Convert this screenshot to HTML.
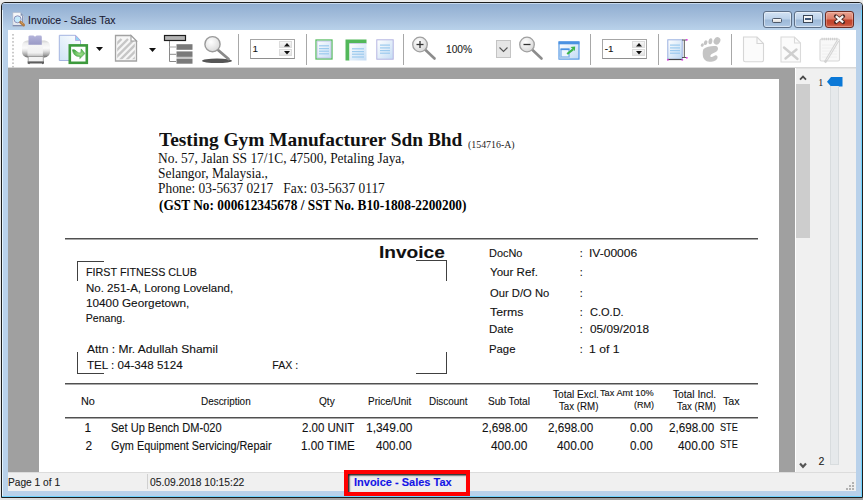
<!DOCTYPE html>
<html><head><meta charset="utf-8">
<style>
*{margin:0;padding:0;box-sizing:border-box}
html,body{width:863px;height:500px;overflow:hidden;background:#e8e8e8;font-family:"Liberation Sans",sans-serif}
.a{position:absolute}
.t{position:absolute;white-space:nowrap;line-height:1;-webkit-text-stroke:0.1px currentColor}
.s{font-family:"Liberation Serif",serif;-webkit-text-stroke:0}
.h{position:absolute;background:#404040;height:1px}
.v{position:absolute;background:#404040;width:1px}
.sep{position:absolute;top:34px;width:1px;height:31px;background:#a8a8a8}
svg{position:absolute;overflow:visible}
</style></head><body>
<div class="a" style="left:0;top:0;width:863px;height:2px;background:#ececec"></div>
<div class="a" style="left:0;top:498px;width:863px;height:2px;background:linear-gradient(90deg,#e4e4e4 0,#c8c8c8 90px,#a2a2a2 220px,#a0a0a0 100%)"></div>
<div class="a" style="left:1px;top:2px;width:862px;height:496px;background:#b9d1ea;border:1px solid #1e1e1e;border-width:1px 1px 1.2px 1px;border-radius:4px 4px 0 0"></div>
<div class="a" style="left:2px;top:3px;width:860px;height:27px;border-radius:3px 3px 0 0;background:linear-gradient(#c6d9ee 0,#c6d9ee 1px,#91aed2 1px,#a3bddb 13px,#b9d2ea 27px)"></div>
<div class="a" style="left:2px;top:10px;width:1px;height:486px;background:#e4f4ff"></div>
<div class="a" style="left:861px;top:10px;width:1px;height:487px;background:#6fd3ff"></div>
<div class="a" style="left:2px;top:496px;width:860px;height:1px;background:#6fd3ff"></div>
<svg style="left:12px;top:12px" width="14" height="15" viewBox="0 0 14 15">
<defs><linearGradient id="tig" x1="0" y1="0" x2="0" y2="1"><stop offset="0" stop-color="#fbfbfb"/><stop offset="1" stop-color="#dfe4ec"/></linearGradient></defs>
<path d="M0.8 0.6 H8.6 L11.8 3.8 V14.3 H0.8 Z" fill="url(#tig)" stroke="#a8b2c4" stroke-width=".6"/>
<path d="M0.8 13.6 H11.8" stroke="#7e8cae" stroke-width="1.2"/>
<path d="M8.6 0.6 V3.8 H11.8 Z" fill="#7f92b4"/>
<path d="M10.6 4 V12.5" stroke="#8696b8" stroke-width="1.2"/>
<circle cx="5.6" cy="7.3" r="3.5" fill="#c4eafc" stroke="#8e92bc" stroke-width="1"/>
<path d="M8.6 10.2 L11.6 13" stroke="#b07a40" stroke-width="2.8" stroke-linecap="round"/>
<path d="M8.9 10.1 L11.2 12.2" stroke="#d9a060" stroke-width="1"/>
</svg>

<div class="a" style="left:763px;top:11px;width:29px;height:17px;border:1px solid #5d6f86;border-radius:3px;background:linear-gradient(#d3e2f3 0,#bcd2ea 7px,#9db9d8 8px,#a9c3e0 13px,#c3d8ee 16px);box-shadow:inset 0 0 0 1px rgba(255,255,255,.45)"></div>
<div class="a" style="left:772px;top:18px;width:10px;height:5px;border:1px solid #4d5868;border-radius:1.5px;background:linear-gradient(#fafafa,#dcdcdc)"></div>
<div class="a" style="left:794px;top:11px;width:29px;height:17px;border:1px solid #5d6f86;border-radius:3px;background:linear-gradient(#d3e2f3 0,#bcd2ea 7px,#9db9d8 8px,#a9c3e0 13px,#c3d8ee 16px);box-shadow:inset 0 0 0 1px rgba(255,255,255,.45)"></div>
<div class="a" style="left:803px;top:15px;width:10px;height:8px;border:1px solid #3a4656;background:#f4f4f4"></div>
<div class="a" style="left:805px;top:17.5px;width:6px;height:2.5px;background:#3f5676"></div>
<div class="a" style="left:825px;top:11px;width:29px;height:17px;border:1px solid #6b2a22;border-radius:3px;background:linear-gradient(#e9a392 0,#dc7d68 7px,#c2432b 8px,#c54a33 12px,#d97a62 16px);box-shadow:inset 0 0 0 1px rgba(255,220,210,.35)"></div>
<svg style="left:833.5px;top:15px" width="11" height="8.5" viewBox="0 0 11 8.5"><path d="M1.8 1.2 L9.2 7.3 M9.2 1.2 L1.8 7.3" stroke="#4a2a26" stroke-width="3.8" stroke-linecap="round"/><path d="M1.8 1.2 L9.2 7.3 M9.2 1.2 L1.8 7.3" stroke="#f6f6f6" stroke-width="2.2" stroke-linecap="butt"/></svg>

<div class="a" style="left:8px;top:30px;width:848px;height:38px;background:#fff"></div>
<div class="a" style="left:8px;top:67px;width:848px;height:1px;background:#d8d8d8"></div>
<svg style="left:12px;top:33.5px" width="2" height="34"><rect x="0.2" y="0.0" width="1.6" height="1.6" fill="#bcbcbc"/><rect x="0.2" y="3.5" width="1.6" height="1.6" fill="#bcbcbc"/><rect x="0.2" y="7.1" width="1.6" height="1.6" fill="#bcbcbc"/><rect x="0.2" y="10.6" width="1.6" height="1.6" fill="#bcbcbc"/><rect x="0.2" y="14.2" width="1.6" height="1.6" fill="#bcbcbc"/><rect x="0.2" y="17.8" width="1.6" height="1.6" fill="#bcbcbc"/><rect x="0.2" y="21.3" width="1.6" height="1.6" fill="#bcbcbc"/><rect x="0.2" y="24.8" width="1.6" height="1.6" fill="#bcbcbc"/><rect x="0.2" y="28.4" width="1.6" height="1.6" fill="#bcbcbc"/><rect x="0.2" y="31.9" width="1.6" height="1.6" fill="#bcbcbc"/></svg>
<svg style="left:21px;top:35px" width="30" height="30" viewBox="0 0 30 30">
<defs>
<linearGradient id="pb" x1="0" y1="0" x2="0" y2="1"><stop offset="0" stop-color="#d2d2d2"/><stop offset=".18" stop-color="#efefef"/><stop offset=".45" stop-color="#fbfbfb"/><stop offset=".62" stop-color="#e2e2e2"/><stop offset=".85" stop-color="#a4a4a4"/><stop offset="1" stop-color="#6a6a6a"/></linearGradient>
<linearGradient id="pp" x1="0" y1="0" x2="0" y2="1"><stop offset="0" stop-color="#b4b4da"/><stop offset="1" stop-color="#9a9ac6"/></linearGradient>
<linearGradient id="pf" x1="0" y1="0" x2="0" y2="1"><stop offset="0" stop-color="#f6f6f6"/><stop offset=".7" stop-color="#f0f0f0"/><stop offset="1" stop-color="#c4c4c4"/></linearGradient>
</defs>
<rect x="1" y="5.4" width="28" height="17" rx="5.5" fill="url(#pb)"/>
<path d="M7.5 1.2 Q8 0.4 9.5 0.6 L12.5 0.6 Q14 2.6 15.5 0.6 L19.5 0.6 Q20.8 0.6 20.8 2 L20.8 9.8 L7.5 9.8 Z" fill="url(#pp)"/>
<rect x="6.5" y="10.6" width="15.4" height="10.4" fill="url(#pf)"/>
<path d="M7.2 21.5 H22.3 V27 H7.2 Z" fill="#f2f2f2" stroke="#9a9a9a" stroke-width=".9"/>
<path d="M6.6 26.6 H23 L23 28.6 L21.5 29.2 L20.8 28.6 H9 L8.2 29.2 L6.6 28.6 Z" fill="#5e5e5e"/>
</svg>
<svg style="left:58px;top:34px" width="32" height="31" viewBox="0 0 32 31">
<defs><linearGradient id="eg" x1="1" y1="0" x2="0" y2="1"><stop offset="0" stop-color="#fff"/><stop offset="1" stop-color="#d0e4f6"/></linearGradient>
<radialGradient id="ag" cx=".6" cy=".5" r=".6"><stop offset="0" stop-color="#a6e690"/><stop offset="1" stop-color="#45a845"/></radialGradient></defs>
<path d="M1.3 1.3 H17.5 L22.5 6.5 V26.5 H1.3 Z" fill="url(#eg)" stroke="#a4b4e0" stroke-width="1"/>
<path d="M17.5 1.3 V6.5 H22.5 Z" fill="#8fd4f4" stroke="#b4a4dc" stroke-width=".8"/>
<rect x="11.8" y="11.4" width="17" height="17.4" fill="#fff" stroke="#3d9a3d" stroke-width="2.6"/>
<path d="M14.4 15.8 Q16.6 15 19 17.8 Q20.6 19.4 22.8 19 L23.2 14.9 L26.9 19.6 L21.8 24.6 L22 22.3 Q18.5 23 16.3 20.5 Q14.8 18.8 14.4 15.8 Z" fill="url(#ag)" stroke="#3e9e3e" stroke-width=".6"/>
</svg>
<svg style="left:96px;top:47px" width="7" height="4"><path d="M0 0 H7 L3.5 4 Z" fill="#111"/></svg>
<svg style="left:148.5px;top:47.5px" width="7" height="4"><path d="M0 0 H7 L3.5 4 Z" fill="#111"/></svg>
<svg style="left:114px;top:34px" width="24" height="29" viewBox="0 0 24 29">
<defs><clipPath id="hc"><path d="M3.2 3.2 H16.5 L20.8 7.5 V25.3 H3.2 Z"/></clipPath></defs>
<path d="M1.5 1.5 H17 L22.5 7 V27 H1.5 Z" fill="#f6f6f6"/>
<g clip-path="url(#hc)"><path d="M-14.5 27 L7.5 5" stroke="#c6c6c6" stroke-width="2.3"/><path d="M-8 27 L14 5" stroke="#c6c6c6" stroke-width="2.3"/><path d="M-1.5 27 L20.5 5" stroke="#c6c6c6" stroke-width="2.3"/><path d="M5 27 L27 5" stroke="#c6c6c6" stroke-width="2.3"/><path d="M11.5 27 L33.5 5" stroke="#c6c6c6" stroke-width="2.3"/><path d="M18 27 L40 5" stroke="#c6c6c6" stroke-width="2.3"/></g>
<path d="M1.5 1.5 H17 L22.5 7 V27 H1.5 Z" fill="none" stroke="#a2a2a2" stroke-width="1.3"/>
<path d="M17 1.5 V7 H22.5 Z" fill="#fff" stroke="#a2a2a2" stroke-width="1.1"/>
</svg>
<svg style="left:163px;top:34px" width="31" height="31" viewBox="0 0 31 31">
<rect x="1.5" y="1.5" width="21" height="5" fill="#b4b4b4" stroke="#1e1e1e" stroke-width="1.2"/>
<path d="M6.5 7 V27.5 M6.5 20.3 H13 M6.5 27.5 H13" stroke="#8a8a8a" stroke-width="1" fill="none"/>
<path d="M6.5 13 H13" stroke="#b4b4b4" stroke-width="1.2" fill="none"/>
<rect x="13.5" y="10.2" width="16" height="5.6" fill="#7a7a7a"/>
<rect x="13.5" y="17.4" width="16" height="5.5" fill="#7a7a7a"/>
<rect x="13.5" y="22.9" width="16" height="2" fill="#c8c8c8"/>
<rect x="13.5" y="24.9" width="16" height="4.8" fill="#7a7a7a"/>
</svg>
<svg style="left:201px;top:35px" width="32" height="29" viewBox="0 0 32 29">
<defs><radialGradient id="lg" cx=".4" cy=".35" r=".7"><stop offset="0" stop-color="#fff"/><stop offset="1" stop-color="#d8d8d8"/></radialGradient></defs>
<ellipse cx="16" cy="25.8" rx="15" ry="2.3" fill="#555"/>
<path d="M17 15 L27.5 24" stroke="#8a8a8a" stroke-width="2.8" stroke-linecap="round"/>
<circle cx="11.5" cy="9.2" r="7.6" fill="url(#lg)" stroke="#9a9a9a" stroke-width="1.4"/>
</svg>
<div class="sep" style="left:238px"></div>
<div class="sep" style="left:306px"></div>
<div class="sep" style="left:403px"></div>
<div class="sep" style="left:590px"></div>
<div class="sep" style="left:658px"></div>
<div class="sep" style="left:731px"></div>
<div class="a" style="left:249.5px;top:39px;width:45px;height:19.5px;border:1.5px solid #a6a6a6;border-bottom-color:#8e8e8e;background:#fff"></div>
<div class="a" style="left:279.3px;top:41.2px;width:13.2px;height:6.4px;background:linear-gradient(#f6f6f6,#e4e4e4);border:1px solid #dcdcdc"></div>
<div class="a" style="left:279.3px;top:49px;width:13.2px;height:6.9px;background:linear-gradient(#f6f6f6,#e4e4e4);border:1px solid #dcdcdc"></div>
<svg style="left:283.5px;top:42.9px" width="6" height="3.4"><path d="M0 3.4 H6 L3 0 Z" fill="#111"/></svg>
<svg style="left:283.5px;top:51.2px" width="6" height="3.4"><path d="M0 0 H6 L3 3.4 Z" fill="#111"/></svg>
<div class="a" style="left:601.8px;top:39px;width:45px;height:19.5px;border:1.5px solid #a6a6a6;border-bottom-color:#8e8e8e;background:#fff"></div>
<div class="a" style="left:631.5999999999999px;top:41.2px;width:13.2px;height:6.4px;background:linear-gradient(#f6f6f6,#e4e4e4);border:1px solid #dcdcdc"></div>
<div class="a" style="left:631.5999999999999px;top:49px;width:13.2px;height:6.9px;background:linear-gradient(#f6f6f6,#e4e4e4);border:1px solid #dcdcdc"></div>
<svg style="left:635.8px;top:42.9px" width="6" height="3.4"><path d="M0 3.4 H6 L3 0 Z" fill="#111"/></svg>
<svg style="left:635.8px;top:51.2px" width="6" height="3.4"><path d="M0 0 H6 L3 3.4 Z" fill="#111"/></svg>
<svg style="left:314.5px;top:38.5px" width="18" height="21" viewBox="0 0 18 21">
<defs><linearGradient id="pg1" x1="0" y1="0" x2="1" y2="1"><stop offset="0" stop-color="#fff"/><stop offset="1" stop-color="#c4dcf4"/></linearGradient></defs>
<rect x="1" y="1" width="16" height="19" fill="url(#pg1)" stroke="#58bc60" stroke-width="1.3"/>
<rect x="2.2" y="2.2" width="13.6" height="16.6" fill="none" stroke="#c8c8ec" stroke-width=".8"/>
<rect x="4" y="6.2" width="10" height="1.2" fill="#9ccaee"/><rect x="4" y="9" width="10" height="1.2" fill="#9ccaee"/><rect x="4" y="11.6" width="10" height="1.2" fill="#9ccaee"/><rect x="4" y="14.2" width="10" height="1.2" fill="#9ccaee"/>
</svg>
<svg style="left:344.5px;top:38.5px" width="22" height="22" viewBox="0 0 22 22">
<defs><linearGradient id="pg2" x1="0" y1="0" x2="1" y2="1"><stop offset="0" stop-color="#fff"/><stop offset="1" stop-color="#c4dcf4"/></linearGradient></defs>
<path d="M0.5 0.5 H21.5 V4.5 H4.5 V21.5 H0.5 Z" fill="#52b85a"/>
<rect x="4.5" y="4.5" width="17" height="17" fill="url(#pg2)"/>
<path d="M4.5 4.5 H21.5" stroke="#c8c8ec" stroke-width=".8"/>
<rect x="7" y="9.2" width="12" height="1.2" fill="#9ccaee"/><rect x="7" y="12" width="12" height="1.2" fill="#9ccaee"/><rect x="7" y="14.6" width="12" height="1.2" fill="#9ccaee"/><rect x="7" y="17.4" width="12" height="1.2" fill="#9ccaee"/>
</svg>
<svg style="left:376px;top:38.5px" width="18" height="21" viewBox="0 0 18 21">
<defs><linearGradient id="pg3" x1="0" y1="0" x2="1" y2="1"><stop offset="0" stop-color="#fff"/><stop offset="1" stop-color="#c4dcf4"/></linearGradient></defs>
<rect x="0.8" y="0.8" width="16.4" height="19.4" fill="url(#pg3)" stroke="#b4b4e2" stroke-width="1"/>
<rect x="4" y="5.5" width="10" height="1.2" fill="#9ccaee"/><rect x="4" y="8.3" width="10" height="1.2" fill="#9ccaee"/><rect x="4" y="11" width="10" height="1.2" fill="#9ccaee"/><rect x="4" y="13.6" width="10" height="1.2" fill="#9ccaee"/>
</svg>
<svg style="left:412px;top:36px" width="26" height="25" viewBox="0 0 26 25">
<defs><radialGradient id="mg412" cx=".4" cy=".35" r=".7"><stop offset="0" stop-color="#fff"/><stop offset="1" stop-color="#d6d6d6"/></radialGradient></defs>
<path d="M13 13.5 L22.5 22.5" stroke="#8c8c8c" stroke-width="2.6" stroke-linecap="round"/>
<circle cx="8" cy="8.5" r="7.3" fill="url(#mg412)" stroke="#a0a0a0" stroke-width="1.3"/>
<path d="M4.5 8.5 H11.5" stroke="#333" stroke-width="1.3"/><path d="M8 5 V12" stroke="#333" stroke-width="1.3"/></svg>
<svg style="left:518.5px;top:36px" width="26" height="25" viewBox="0 0 26 25">
<defs><radialGradient id="mg518.5" cx=".4" cy=".35" r=".7"><stop offset="0" stop-color="#fff"/><stop offset="1" stop-color="#d6d6d6"/></radialGradient></defs>
<path d="M13 13.5 L22.5 22.5" stroke="#8c8c8c" stroke-width="2.6" stroke-linecap="round"/>
<circle cx="8" cy="8.5" r="7.3" fill="url(#mg518.5)" stroke="#a0a0a0" stroke-width="1.3"/>
<path d="M4.5 8.5 H11.5" stroke="#333" stroke-width="1.3"/></svg>
<div class="a" style="left:495.5px;top:40px;width:15.5px;height:18px;background:#e6e6e6;border:1px solid #c4c4c4"></div>
<svg style="left:499px;top:47px" width="9" height="5"><path d="M0.5 0.5 L4.5 4.5 L8.5 0.5" stroke="#555" stroke-width="1.1" fill="none"/></svg>
<svg style="left:557.5px;top:40.5px" width="22" height="19" viewBox="0 0 22 19">
<defs><linearGradient id="wg" x1="0" y1="0" x2="1" y2="1"><stop offset="0" stop-color="#fff"/><stop offset="1" stop-color="#c0daf4"/></linearGradient></defs>
<rect x="1" y="0.9" width="20" height="17.2" fill="url(#wg)" stroke="#4a92e2" stroke-width="1.1"/>
<rect x="0.6" y="0.5" width="20.8" height="2.8" fill="#4a92e2"/>
<rect x="3" y="8" width="8" height="8" fill="#f0f6fd" stroke="#5a9ce6" stroke-width="1"/>
<rect x="2.6" y="7.6" width="8.8" height="1.5" fill="#4a92e2"/>
<rect x="1.2" y="15.6" width="10" height="2.2" fill="#a8c8ec"/>
<path d="M9.2 13 L15 8.3" stroke="#3bb54a" stroke-width="2.2"/>
<path d="M12.6 6 L17.2 5.4 L16.8 10 Z" fill="#3bb54a"/>
</svg>
<svg style="left:666.5px;top:38.5px" width="22" height="22" viewBox="0 0 22 22">
<defs><linearGradient id="pg4" x1="0" y1="0" x2="1" y2="1"><stop offset="0" stop-color="#fff"/><stop offset="1" stop-color="#bcd8f2"/></linearGradient></defs>
<rect x="0.8" y="0.8" width="14.4" height="19.6" fill="url(#pg4)" stroke="#9ab0e0" stroke-width="1"/>
<rect x="3" y="5.5" width="10" height="1.2" fill="#9ccaee"/><rect x="3" y="8.3" width="10" height="1.2" fill="#9ccaee"/><rect x="3" y="11" width="10" height="1.2" fill="#9ccaee"/><rect x="3" y="13.6" width="10" height="1.2" fill="#9ccaee"/>
<path d="M0.5 20.5 H15.5" stroke="#444" stroke-width="1.2"/>
<path d="M15 1 H19.5 M17.3 1 V18.5 M15 18.5 H19.5" stroke="#555" stroke-width="1" fill="none"/>
<rect x="19" y="0" width="1.6" height="1.6" fill="#e040e0"/><rect x="19" y="18" width="1.6" height="1.6" fill="#e040e0"/>
<rect x="0" y="20" width="1.6" height="1.6" fill="#e040e0"/><rect x="14.5" y="20" width="1.6" height="1.6" fill="#e040e0"/>
</svg>
<svg style="left:700px;top:36.5px" width="22" height="26" viewBox="0 0 22 26">
<g fill="#c4c4c4">
<ellipse cx="17" cy="3.9" rx="3.1" ry="4" transform="rotate(30 17 3.9)"/>
<ellipse cx="10.4" cy="4.3" rx="1.9" ry="3" transform="rotate(10 10.4 4.3)"/>
<ellipse cx="5.6" cy="5.7" rx="1.7" ry="2.4" transform="rotate(25 5.6 5.7)"/>
<ellipse cx="2.3" cy="8.1" rx="1.4" ry="1.8" transform="rotate(35 2.3 8.1)"/>
<path d="M3.5 12 C6 9.5 12 8.6 15.8 9 C18.5 9.5 18.5 12.5 17 14 C15 16 11 16.5 10.4 18.8 C10.2 20.5 12 20.5 14 19 C16 17.6 18 18.5 17.5 21 C17 23.5 13 25 9.5 24.8 C5.5 24.5 3 22 2.8 18 C2.6 15.5 2.8 13.5 3.5 12 Z"/>
</g></svg>
<svg style="left:741px;top:35.5px" width="24" height="27" viewBox="0 0 24 27">
<path d="M2.5 1 H16 L22.5 7.5 V24 Q22.5 25.8 20.7 25.8 H4.3 Q2.5 25.8 2.5 24 Z" fill="#fbfbfb" stroke="#d6d6d6" stroke-width="1.1"/>
<path d="M16 1 V7.5 H22.5" fill="none" stroke="#d6d6d6" stroke-width="1.1"/>
</svg>
<svg style="left:780px;top:35.5px" width="22" height="27" viewBox="0 0 22 27">
<path d="M1 1 H14.5 L20.5 7 V26 H1 Z" fill="#fbfbfb" stroke="#dadada" stroke-width="1.1"/>
<path d="M14.5 1 V7 H20.5" fill="none" stroke="#dadada" stroke-width="1.1"/>
<path d="M4 11.5 L17.5 23 M16.5 13.5 L5.5 22.5" stroke="#cfcfcf" stroke-width="2.4" stroke-linecap="round"/>
</svg>
<svg style="left:819px;top:36.5px" width="22" height="27" viewBox="0 0 22 27">
<rect x="1" y="2" width="19.5" height="22" rx="1.5" fill="#f8f8f8" stroke="#d8d8d8" stroke-width="1.1"/>
<path d="M2.5 2 H19" stroke="#d0d0d0" stroke-width="2.6" stroke-dasharray="1.2 0.9"/>
<path d="M3 8 H18 M3 11 H18 M3 14 H18 M3 17 H18 M3 20 H18" stroke="#ececec" stroke-width=".8"/>
<path d="M19 3.5 L7.5 23 L5.8 25.5" stroke="#d2d2d2" stroke-width="2.6" fill="none"/><path d="M19 3.5 L7.5 23" stroke="#f4f4f4" stroke-width=".8" fill="none"/>
</svg>
<div class="a" style="left:8px;top:68px;width:787px;height:405px;background:#a0a0a0"></div>
<div class="a" style="left:795px;top:68px;width:1px;height:405px;background:#fff"></div>
<div class="a" style="left:796px;top:68px;width:60px;height:405px;background:#f0f0f0"></div>
<div class="a" style="left:796px;top:68px;width:60px;height:1px;background:#e3e3e3"></div>
<div class="a" style="left:39px;top:79px;width:740px;height:394px;background:#fff"></div>
<!-- doc lines -->
<div class="a" style="left:65px;top:238px;width:693px;height:2px;background:linear-gradient(#505050 50%,#a8a8a8 50%)"></div>
<div class="a" style="left:65px;top:383px;width:693px;height:2px;background:linear-gradient(#505050 50%,#a8a8a8 50%)"></div>
<div class="a" style="left:65px;top:417px;width:693px;height:2px;background:linear-gradient(#505050 50%,#a8a8a8 50%)"></div>
<div class="h" style="left:77px;top:261px;width:27px"></div>
<div class="v" style="left:77px;top:261px;height:20px"></div>
<div class="v" style="left:77px;top:352px;height:22px"></div>
<div class="h" style="left:77px;top:373px;width:27px"></div>
<div class="h" style="left:416px;top:260px;width:31px"></div>
<div class="v" style="left:446px;top:260px;height:21px"></div>
<div class="v" style="left:446px;top:352px;height:22px"></div>
<div class="h" style="left:416px;top:373px;width:31px"></div>

<svg style="left:799px;top:73.5px" width="8" height="7"><path d="M1 5.6 L4 2.6 L7 5.6" stroke="#4a4a4a" stroke-width="1.8" fill="none"/></svg>
<div class="a" style="left:796px;top:84px;width:13.5px;height:154px;background:#cdcdcd"></div>
<svg style="left:826.5px;top:76.5px" width="16" height="9.5"><path d="M0 4.75 L4 0 H15.5 V9.5 H4 Z" fill="#0a78d7"/></svg>
<div class="a" style="left:829.5px;top:86px;width:9.5px;height:379px;background:#e6e9eb;border:1px solid #d8dcde;border-top:none"></div>
<svg style="left:799px;top:461.5px" width="8" height="7"><path d="M1 1.6 L4 4.8 L7 1.6" stroke="#555" stroke-width="2.2" fill="none"/></svg>


<div class="a" style="left:8px;top:472px;width:848px;height:1px;background:#dcdcdc"></div>
<div class="a" style="left:8px;top:473px;width:848px;height:18px;background:#f0f0f0"></div>
<div class="a" style="left:147px;top:474px;width:1px;height:15px;background:#d0d0d0"></div>
<div class="a" style="left:344px;top:470px;width:126px;height:26px;border:4px solid #ff0000;background:#eeeeee;box-shadow:inset 1.5px 1.5px 1.5px #222"></div>
<svg style="left:845.8px;top:481.5px" width="9" height="9"><g fill="#b2b2b2"><rect x="6" y="0" width="2" height="2"/><rect x="3" y="3" width="2" height="2"/><rect x="6" y="3" width="2" height="2"/><rect x="0" y="6" width="2" height="2"/><rect x="3" y="6" width="2" height="2"/><rect x="6" y="6" width="2" height="2"/></g></svg>
<div class="t s" style="left:159.40px;top:130px;font-size:19px;color:#111;transform:scaleX(1.0202);transform-origin:0 0;font-weight:bold">Testing Gym Manufacturer Sdn Bhd</div>
<div class="t s" style="left:467.80px;top:141px;font-size:9.5px;color:#222;transform:scaleX(1.0400);transform-origin:0 0">(154716-A)</div>
<div class="t s" style="left:157.92px;top:152px;font-size:13.7px;color:#111;transform:scaleX(0.9800);transform-origin:0 0">No. 57, Jalan SS 17/1C, 47500, Petaling Jaya,</div>
<div class="t s" style="left:157.92px;top:167px;font-size:13.7px;color:#111;transform:scaleX(0.9818);transform-origin:0 0">Selangor, Malaysia.,</div>
<div class="t s" style="left:157.92px;top:182px;font-size:13.7px;color:#111;transform:scaleX(0.9784);transform-origin:0 0">Phone:&#160;03-5637&#160;0217&#160;&#160;&#160;Fax:&#160;03-5637&#160;0117</div>
<div class="t s" style="left:158.90px;top:199px;font-size:13.7px;color:#000;transform:scaleX(0.9746);transform-origin:0 0;font-weight:bold">(GST No: 000612345678 / SST No. B10-1808-2200200)</div>
<div class="t" style="left:85.68px;top:267px;font-size:10.6px;color:#111;transform:scaleX(1.0157);transform-origin:0 0">FIRST FITNESS CLUB</div>
<div class="t" style="left:85.61px;top:283px;font-size:10.6px;color:#111;transform:scaleX(1.0866);transform-origin:0 0">No. 251-A, Lorong Loveland,</div>
<div class="t" style="left:85.59px;top:298px;font-size:10.6px;color:#111;transform:scaleX(1.1099);transform-origin:0 0">10400 Georgetown,</div>
<div class="t" style="left:85.70px;top:313px;font-size:10.6px;color:#111">Penang.</div>
<div class="t" style="left:86.70px;top:344px;font-size:10.6px;color:#111;transform:scaleX(1.1348);transform-origin:0 0">Attn : Mr. Adullah Shamil</div>
<div class="t" style="left:86.70px;top:360px;font-size:10.6px;color:#111;transform:scaleX(1.0954);transform-origin:0 0">TEL : 04-348 5124</div>
<div class="t" style="left:272.30px;top:360px;font-size:10.6px;color:#111">FAX :</div>
<div class="t" style="left:378.66px;top:245px;font-size:16.8px;color:#111;transform:scaleX(1.1375);transform-origin:0 0;font-weight:bold">Invoice</div>
<div class="t" style="left:489.37px;top:248px;font-size:10.6px;color:#111;transform:scaleX(1.0323);transform-origin:0 0">DocNo</div>
<div class="t" style="left:579.70px;top:248px;font-size:10.6px;color:#111">:</div>
<div class="t" style="left:588.86px;top:248px;font-size:10.6px;color:#111;transform:scaleX(1.1366);transform-origin:0 0">IV-00006</div>
<div class="t" style="left:490.40px;top:267px;font-size:10.6px;color:#111;transform:scaleX(1.0930);transform-origin:0 0">Your Ref.</div>
<div class="t" style="left:579.70px;top:267px;font-size:10.6px;color:#111">:</div>
<div class="t" style="left:490.40px;top:288px;font-size:10.6px;color:#111;transform:scaleX(1.0589);transform-origin:0 0">Our D/O No</div>
<div class="t" style="left:579.70px;top:288px;font-size:10.6px;color:#111">:</div>
<div class="t" style="left:490.40px;top:307px;font-size:10.6px;color:#111;transform:scaleX(1.1586);transform-origin:0 0">Terms</div>
<div class="t" style="left:579.70px;top:307px;font-size:10.6px;color:#111">:</div>
<div class="t" style="left:590.00px;top:307px;font-size:10.6px;color:#111;transform:scaleX(1.0406);transform-origin:0 0">C.O.D.</div>
<div class="t" style="left:489.31px;top:324px;font-size:10.6px;color:#111;transform:scaleX(1.0857);transform-origin:0 0">Date</div>
<div class="t" style="left:579.70px;top:324px;font-size:10.6px;color:#111">:</div>
<div class="t" style="left:590.00px;top:324px;font-size:10.6px;color:#111;transform:scaleX(1.1132);transform-origin:0 0">05/09/2018</div>
<div class="t" style="left:489.33px;top:344px;font-size:10.6px;color:#111;transform:scaleX(1.0696);transform-origin:0 0">Page</div>
<div class="t" style="left:579.70px;top:344px;font-size:10.6px;color:#111">:</div>
<div class="t" style="left:588.85px;top:344px;font-size:10.6px;color:#111;transform:scaleX(1.1480);transform-origin:0 0">1 of 1</div>
<div class="t" style="left:80.97px;top:396px;font-size:10.6px;color:#111;transform:scaleX(1.0250);transform-origin:0 0">No</div>
<div class="t" style="left:200.86px;top:396px;font-size:10.6px;color:#111;transform:scaleX(0.9373);transform-origin:0 0">Description</div>
<div class="t" style="left:319.10px;top:396px;font-size:10.6px;color:#111;transform:scaleX(0.9529);transform-origin:0 0">Qty</div>
<div class="t" style="left:368.46px;top:396px;font-size:10.6px;color:#111;transform:scaleX(0.9422);transform-origin:0 0">Price/Unit</div>
<div class="t" style="left:428.67px;top:396px;font-size:10.6px;color:#111;transform:scaleX(0.9350);transform-origin:0 0">Discount</div>
<div class="t" style="left:488.05px;top:396px;font-size:10.6px;color:#111;transform:scaleX(0.9548);transform-origin:0 0">Sub Total</div>
<div class="t" style="left:553.20px;top:389px;font-size:10.6px;color:#111;transform:scaleX(0.9511);transform-origin:0 0">Total Excl.</div>
<div class="t" style="left:558.50px;top:401px;font-size:10.6px;color:#111;transform:scaleX(0.9163);transform-origin:0 0">Tax (RM)</div>
<div class="t" style="left:600.20px;top:390px;font-size:8.2px;color:#111;transform:scaleX(1.1250);transform-origin:0 0">Tax Amt 10%</div>
<div class="t" style="left:634.30px;top:402px;font-size:8.2px;color:#111;transform:scaleX(1.1056);transform-origin:0 0">(RM)</div>
<div class="t" style="left:673.00px;top:389px;font-size:10.6px;color:#111;transform:scaleX(0.9636);transform-origin:0 0">Total Incl.</div>
<div class="t" style="left:676.50px;top:401px;font-size:10.6px;color:#111;transform:scaleX(0.9047);transform-origin:0 0">Tax (RM)</div>
<div class="t" style="left:722.80px;top:396px;font-size:10.6px;color:#111;transform:scaleX(1.0125);transform-origin:0 0">Tax</div>
<div class="t" style="left:84.50px;top:423px;font-size:11.9px;color:#111">1</div>
<div class="t" style="left:111.17px;top:423px;font-size:11.9px;color:#111;transform:scaleX(0.9297);transform-origin:0 0">Set Up Bench DM-020</div>
<div class="t" style="left:301.70px;top:423px;font-size:11.9px;color:#111;transform:scaleX(0.9667);transform-origin:0 0">2.00 UNIT</div>
<div class="t" style="left:365.60px;top:423px;font-size:11.9px;color:#111;transform:scaleX(1.0044);transform-origin:0 0">1,349.00</div>
<div class="t" style="left:482.00px;top:423px;font-size:11.9px;color:#111;transform:scaleX(0.9826);transform-origin:0 0">2,698.00</div>
<div class="t" style="left:547.60px;top:423px;font-size:11.9px;color:#111;transform:scaleX(0.9783);transform-origin:0 0">2,698.00</div>
<div class="t" style="left:629.90px;top:423px;font-size:11.9px;color:#111;transform:scaleX(0.9783);transform-origin:0 0">0.00</div>
<div class="t" style="left:669.00px;top:423px;font-size:11.9px;color:#111;transform:scaleX(0.9783);transform-origin:0 0">2,698.00</div>
<div class="t" style="left:719.62px;top:423px;font-size:10.4px;color:#111;transform:scaleX(0.8789);transform-origin:0 0">STE</div>
<div class="t" style="left:85.50px;top:441px;font-size:11.9px;color:#111">2</div>
<div class="t" style="left:111.40px;top:441px;font-size:11.9px;color:#111;transform:scaleX(0.9131);transform-origin:0 0">Gym Equipment Servicing/Repair</div>
<div class="t" style="left:300.72px;top:441px;font-size:11.9px;color:#111;transform:scaleX(0.9849);transform-origin:0 0">1.00 TIME</div>
<div class="t" style="left:376.30px;top:441px;font-size:11.9px;color:#111;transform:scaleX(0.9861);transform-origin:0 0">400.00</div>
<div class="t" style="left:491.30px;top:441px;font-size:11.9px;color:#111;transform:scaleX(0.9972);transform-origin:0 0">400.00</div>
<div class="t" style="left:556.70px;top:441px;font-size:11.9px;color:#111;transform:scaleX(0.9972);transform-origin:0 0">400.00</div>
<div class="t" style="left:629.90px;top:441px;font-size:11.9px;color:#111;transform:scaleX(0.9783);transform-origin:0 0">0.00</div>
<div class="t" style="left:678.10px;top:441px;font-size:11.9px;color:#111;transform:scaleX(0.9972);transform-origin:0 0">400.00</div>
<div class="t" style="left:719.62px;top:440px;font-size:10.4px;color:#111;transform:scaleX(0.8789);transform-origin:0 0">STE</div>
<div class="t" style="left:28.19px;top:16px;font-size:10.3px;color:#1b1b33;transform:scaleX(1.0141);transform-origin:0 0">Invoice - Sales Tax</div>
<div class="t" style="left:8.29px;top:478px;font-size:10.1px;color:#222;transform:scaleX(1.0080);transform-origin:0 0">Page 1 of 1</div>
<div class="t" style="left:149.50px;top:478px;font-size:10.1px;color:#222;transform:scaleX(1.0185);transform-origin:0 0">05.09.2018 10:15:22</div>
<div class="t" style="left:354.00px;top:478px;font-size:10px;color:#1414e6;transform:scaleX(1.1000);transform-origin:0 0;font-weight:bold">Invoice - Sales Tax</div>
<div class="t" style="left:445.73px;top:44px;font-size:10.5px;color:#222;transform:scaleX(0.9731);transform-origin:0 0">100%</div>
<div class="t" style="left:252.50px;top:44px;font-size:9.8px;color:#111">1</div>
<div class="t" style="left:604.70px;top:44px;font-size:9.8px;color:#111">-1</div>
<div class="t s" style="left:818.20px;top:78px;font-size:10px;color:#222">1</div>
<div class="t" style="left:818.50px;top:456px;font-size:10.5px;color:#222">2</div>
</body></html>
